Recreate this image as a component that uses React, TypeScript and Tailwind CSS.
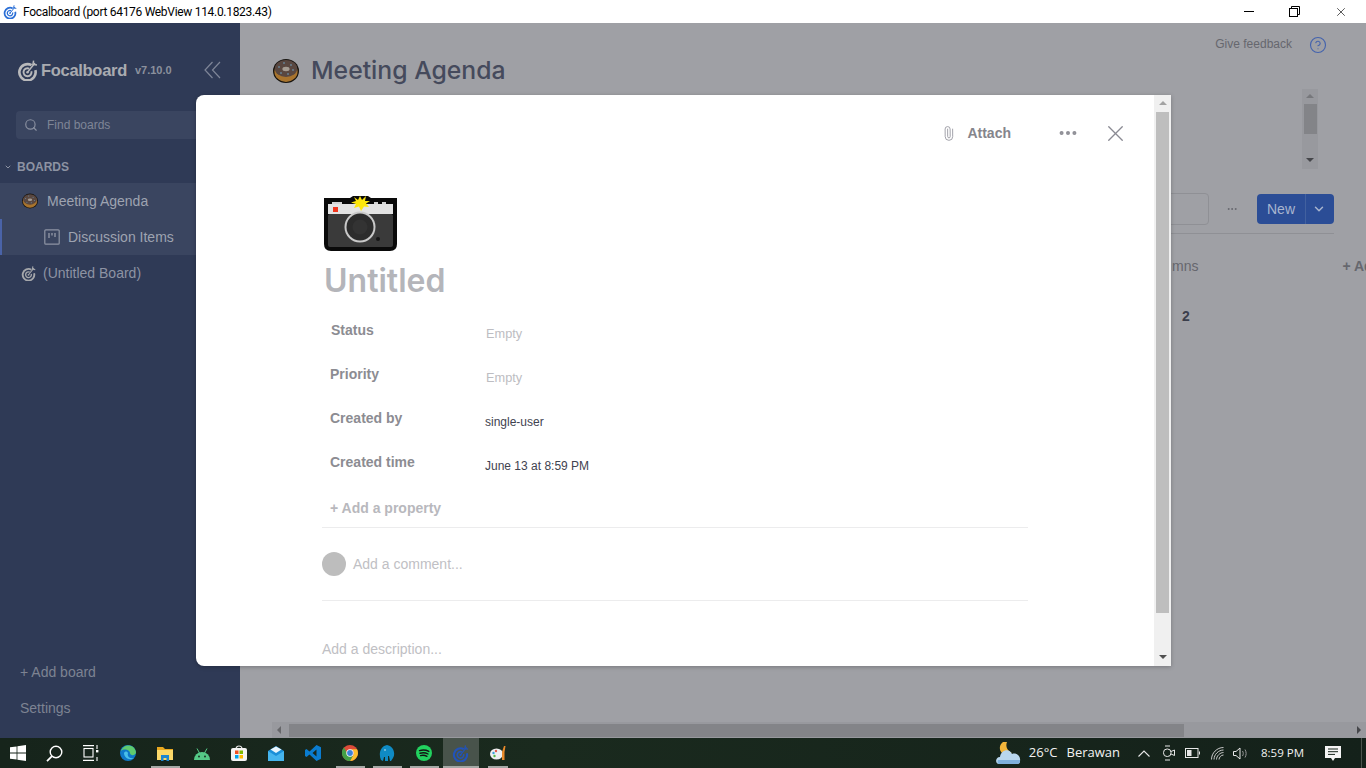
import { ChevronDown, CircleHelp, Ellipsis, Paperclip, Search, X } from "lucide-react";

const sans = "font-['Liberation_Sans',Arial,sans-serif]";
const segoe = "font-['Open_Sans','Noto_Sans',sans-serif]";

function Donut({ size }: { size: number }) {
  return (
    <svg width={size} height={size} viewBox="0 0 26 26">
      <ellipse cx="13" cy="13" rx="13" ry="12" fill="#17130f" />
      <ellipse cx="13" cy="13.5" rx="11.6" ry="10.4" fill="#a8742e" />
      <ellipse cx="13" cy="10.5" rx="11.2" ry="8.4" fill="#594740" />
      <ellipse cx="13" cy="11" rx="3.6" ry="2.2" fill="#a59c92" />
      <circle cx="6" cy="9" r=".8" fill="#6fa8c9" />
      <circle cx="11" cy="5" r=".8" fill="#6fa8c9" />
      <circle cx="18" cy="7" r=".8" fill="#6fa8c9" />
      <circle cx="20" cy="12" r=".8" fill="#6fa8c9" />
      <circle cx="8" cy="15" r=".8" fill="#6fa8c9" />
      <circle cx="15" cy="16" r=".8" fill="#6fa8c9" />
    </svg>
  );
}

function TargetLogo({ size, color }: { size: number; color: string }) {
  return (
    <svg width={size} height={size} viewBox="0 0 24 24" fill="none" stroke={color}>
      <path d="M16.65 5.95A9.3 9.3 0 1 0 20.98 11.6" strokeWidth="3" />
      <path d="M13.9 9.83A4.6 4.6 0 1 0 16.44 12.8" strokeWidth="2.2" />
      <circle cx="12" cy="14" r="1.4" fill={color} stroke="none" />
      <path d="M12 14L20.5 3.5" strokeWidth="1.7" />
      <path d="M19 .6L18.2 5L22.8 5.8" strokeWidth="1.7" />
    </svg>
  );
}

function Camera() {
  return (
    <svg width="73" height="56" viewBox="0 0 73 56">
      <path d="M0 2H26L29 0H44L47 2H73V48Q73 55 66 55H7Q0 55 0 48Z" fill="#0a0a0a" />
      <rect x="8" y="6" width="10" height="3" fill="#d2d2d2" />
      <rect x="50" y="6" width="4" height="3" fill="#d2d2d2" />
      <rect x="58" y="6" width="4" height="3" fill="#d2d2d2" />
      <rect x="4" y="8" width="65" height="10" fill="#e3e3e3" />
      <rect x="4" y="18" width="65" height="33" rx="2" fill="#3a3a3a" />
      <rect x="9" y="11" width="5" height="5" fill="#f1361d" />
      <circle cx="36" cy="31" r="15.5" fill="#c9c9c9" />
      <circle cx="36" cy="31" r="13.5" fill="#2c2c2c" />
      <circle cx="36" cy="31" r="7.5" fill="#333" />
      <circle cx="54" cy="43" r="2" fill="#161616" />
      <path d="M36 0L38 4L42 0L41 5L46 5L42 7.5L45 11L40 10.5L37 15L35 10.5L30 12L32 8L27 6.5L32 5L30 1L34 4Z" fill="#fde60c" />
    </svg>
  );
}

function ScrollArrow({ dir, color }: { dir: "up" | "down" | "left" | "right"; color: string }) {
  const points = { up: "4,1 8,5 0,5", down: "0,1 8,1 4,5", left: "5,0 5,8 1,4", right: "1,0 1,8 5,4" }[dir];
  return (
    <svg width="8" height="8" viewBox="0 0 8 8" className="shrink-0">
      <polygon points={points} fill={color} />
    </svg>
  );
}

function Property({ label, value, empty, indent }: { label: string; value: string; empty?: boolean; indent?: boolean }) {
  return (
    <div className="flex h-[44px] items-start">
      <div className={`w-[163px] pt-[1px] text-[14px] font-bold leading-[16px] text-[#8c8c92] ${indent ? "pl-[9px]" : "pl-[8px]"}`}>{label}</div>
      <div className={`pt-[6px] leading-[14px] ${empty ? "pl-[1px] text-[12.75px] text-[#bdbdc2]" : "text-[12px] text-[#3f4350]"}`}>{value}</div>
    </div>
  );
}

function Sidebar() {
  return (
    <aside className={`flex w-[240px] shrink-0 flex-col bg-[#2f3a56] ${sans}`}>
      <div className="flex h-[60px] items-end pl-[17px] pb-[1px]">
        <div className="flex h-[24px] items-center">
          <TargetLogo size={21} color="#b9b9bb" />
          <span className="ml-[3px] text-[16.5px] font-bold tracking-[-0.3px] text-[#a9abb0]">Focalboard</span>
          <span className="ml-[8px] mt-[1px] text-[11px] font-bold text-[#8b909d]">v7.10.0</span>
          <svg width="17" height="18" viewBox="0 0 17 18" fill="none" stroke="#7f8698" strokeWidth="1.2" className="ml-[32px]">
            <path d="M8.5 1L1 9L8.5 17M16 1L8.5 9L16 17" />
          </svg>
        </div>
      </div>
      <div className="ml-[16px] mt-[28px] flex h-[28px] items-center rounded-[4px] bg-[#3a4560] pl-[8px] text-[12px] text-[#7f8697]">
        <Search size={14} className="mr-[9px] text-[#8a90a0]" />
        Find boards
      </div>
      <div className="mt-[16px] flex h-[28px] items-center pb-[4px] text-[12px] font-bold text-[#8d93a3]">
        <ChevronDown size={8} strokeWidth={3} className="ml-[4px] mr-[5px]" />
        BOARDS
      </div>
      <div className="flex h-[36px] items-center bg-[#3a4560] pl-[22px] text-[14px] text-[#9ea3b0]">
        <Donut size={16} />
        <span className="ml-[9px]">Meeting Agenda</span>
      </div>
      <div className="flex h-[36px] items-center border-l-[2px] border-[#4a63a8] bg-[#3a4560] pl-[42px] text-[14px] text-[#9ea3b0]">
        <svg width="16" height="16" viewBox="0 0 16 16" fill="none" stroke="#8e94a4" strokeWidth="1.2">
          <rect x=".8" y=".8" width="14.4" height="14.4" rx="1" />
          <path d="M5 4V9M8 4V6.5M11 4V8" strokeWidth="1.4" />
        </svg>
        <span className="ml-[8px]">Discussion Items</span>
      </div>
      <div className="flex h-[36px] items-center pl-[21px] text-[14px] text-[#8d93a3]">
        <TargetLogo size={15} color="#a5a7ab" />
        <span className="ml-[7px]">(Untitled Board)</span>
      </div>
      <div className="mt-auto pb-[12px] pl-[20px] text-[14px] text-[#7d8392]">
        <div className="flex h-[36px] items-center">+ Add board</div>
        <div className="flex h-[36px] items-center">Settings</div>
      </div>
    </aside>
  );
}

function Board() {
  return (
    <main className={`relative flex min-w-0 flex-1 flex-col overflow-hidden bg-[#9fa0a5] ${sans}`}>
      <div className="flex h-[31px] items-end justify-end pr-[39px]">
        <span className="mb-[1px] text-[12px] text-[#66676e]">Give feedback</span>
        <CircleHelp size={18} strokeWidth={1.5} className="ml-[17px] text-[#4463ad]" />
      </div>
      <div className="flex h-[35px] items-center pb-[1px] pl-[33px]">
        <Donut size={26} />
        <span className="ml-[12px] font-['Inter',sans-serif] text-[24.75px] font-medium text-[#454a5c]">Meeting Agenda</span>
      </div>
      <div className="mr-[48px] flex h-[80px] w-[16px] flex-col items-center justify-between self-end bg-[#98999e] py-[4px]">
        <ScrollArrow dir="up" color="#77787c" />
        <div className="mb-[22px] mt-[2px] h-[30px] w-[13px] bg-[#838488]" />
        <ScrollArrow dir="down" color="#45464a" />
      </div>
      <div className="mr-[32px] mt-[24px] flex h-[41px] items-start justify-end border-b border-[#8f9095]">
        <div className="h-[32px] w-[60px] rounded-[4px] border border-[#8f9095]" />
        <Ellipsis size={12} className="ml-[17px] mt-[10px] text-[#66676e]" />
        <div className="ml-[19px] mt-[1px] flex h-[30px] w-[77px] items-center rounded-[4px] bg-[#2b4d96] text-[14px] text-[#a9b5cf]">
          <span className="flex h-full w-[49px] items-center justify-center border-r border-[#42619f]">New</span>
          <ChevronDown size={14} strokeWidth={2.5} className="ml-[6px]" />
        </div>
      </div>
      <div className="mt-[23px] flex h-[18px] items-center text-[14px]">
        <span className="ml-[932px] text-[#66676e]">mns</span>
        <span className="ml-[144px] whitespace-nowrap font-bold text-[#66676e]">+ Add</span>
      </div>
      <div className="ml-[942px] mt-[31px] text-[14px] font-bold text-[#3b3e4b]">2</div>
      <div className="ml-[32px] mt-auto flex h-[16px] items-center bg-[#98999e] pl-[4px] pr-[2px]">
        <ScrollArrow dir="left" color="#66676a" />
        <div className="ml-[5px] h-[13px] w-[895px] bg-[#838488]" />
        <div className="flex-1" />
        <ScrollArrow dir="right" color="#45464a" />
      </div>
    </main>
  );
}

function CardDialog() {
  return (
    <div className={`absolute left-[196px] top-[72px] flex h-[571px] w-[975px] overflow-hidden rounded-l-[8px] bg-white shadow-[0_1px_4px_rgba(0,0,0,0.25)] ${sans}`}>
      <div className="flex min-w-0 flex-1 flex-col overflow-hidden">
        <div className="flex h-[76px] items-center pr-[25px]">
          <div className="ml-auto flex items-center">
            <Paperclip size={15} strokeWidth={1.4} className="-rotate-45 text-[#9a9aa3]" />
            <span className="ml-[11px] text-[14px] font-bold text-[#85858c]">Attach</span>
            <Ellipsis size={22} strokeWidth={2.4} className="ml-[46px] text-[#8f8f96]" />
            <X size={27} strokeWidth={1.2} className="ml-[23px] text-[#8a8a93]" />
          </div>
        </div>
        <div className="ml-[126px] w-[706px]">
          <div className="ml-[2px] mt-[25px] h-[56px]">
            <Camera />
          </div>
          <div className="ml-[2px] mt-[9px] h-[40px] font-['Inter',sans-serif] text-[32px] font-semibold leading-[40px] text-[#b4b5ba]">Untitled</div>
          <div className="mt-[20px]">
            <Property label="Status" value="Empty" empty indent />
            <Property label="Priority" value="Empty" empty />
            <Property label="Created by" value="single-user" />
            <Property label="Created time" value="June 13 at 8:59 PM" />
          </div>
          <div className="h-[30px] pl-[8px] pt-[3px] text-[14px] font-bold leading-[16px] text-[#b8b8bd]">+ Add a property</div>
          <div className="flex h-[74px] items-center border-y border-[#ececed]">
            <div className="h-[24px] w-[24px] rounded-full bg-[#bdbdbd]" />
            <span className="ml-[7px] text-[14px] text-[#c0c0c4]">Add a comment...</span>
          </div>
          <div className="mt-[40px] text-[14px] leading-[16px] text-[#c0c0c4]">Add a description...</div>
        </div>
      </div>
      <div className="flex w-[17px] shrink-0 flex-col items-center bg-[#f0f0f0]">
        <div className="flex h-[17px] items-center justify-center">
          <ScrollArrow dir="up" color="#a3a3a3" />
        </div>
        <div className="h-[501px] w-[13px] bg-[#bebebe]" />
        <div className="mt-auto flex h-[17px] items-center justify-center">
          <ScrollArrow dir="down" color="#505050" />
        </div>
      </div>
    </div>
  );
}

function Slot({ children, width = "w-[37px]", bar, active }: { children?: React.ReactNode; width?: string; bar?: boolean; active?: boolean }) {
  return (
    <div className={`relative flex h-full shrink-0 items-center justify-center ${width} ${active ? "bg-[#48534b]" : ""}`}>
      {children}
      {bar && <div className={`absolute bottom-0 h-[2px] bg-[#a5a9a6] ${active ? "inset-x-0" : "inset-x-[4px]"}`} />}
    </div>
  );
}

function TaskbarIcons() {
  return (
    <div className="flex h-full">
      <Slot width="w-[36.5px]">
        <svg width="16" height="16" viewBox="0 0 16 16" fill="#fff">
          <path d="M0 2.3L6.6 1.4V7.6H0ZM7.4 1.3L16 0V7.6H7.4ZM0 8.4H6.6V14.6L0 13.7ZM7.4 8.4H16V16L7.4 14.7Z" />
        </svg>
      </Slot>
      <Slot width="w-[36.5px]">
        <svg width="17" height="17" viewBox="0 0 17 17" fill="none" stroke="#fff" strokeWidth="1.4">
          <circle cx="10" cy="7" r="5.8" />
          <path d="M6 11.2L1 16.2" strokeWidth="1.8" />
        </svg>
      </Slot>
      <Slot width="w-[36.5px]">
        <svg width="16" height="16" viewBox="0 0 16 16" fill="none" stroke="#fff" strokeWidth="1.1">
          <rect x="1" y="3.5" width="9" height="8.5" />
          <path d="M0 .6H11M0 15.4H11M14 0V4M14 12V16" />
          <rect x="13" y="5" width="2.4" height="2.4" fill="#fff" stroke="none" />
        </svg>
      </Slot>
      <Slot>
        <svg width="16" height="16" viewBox="0 0 16 16">
          <circle cx="8" cy="8" r="8" fill="#0f78c8" />
          <path d="M1 6C3-1 14-2 16 7C16 11 10 11 10 8C10 5 4 3 1 6Z" fill="#5fcb6e" />
          <path d="M4 8C4 13 10 16 14 13C9 14 7 11 8 8C7 6 5 6 4 8Z" fill="#49bfe9" />
        </svg>
      </Slot>
      <Slot bar>
        <svg width="16" height="15" viewBox="0 0 16 15">
          <path d="M0 1H6L8 3H16V14H0Z" fill="#e8a820" />
          <rect y="4" width="16" height="10" fill="#fbd96a" />
          <path d="M4 9H12V15H9.5V12H6.5V15H4Z" fill="#1c86d1" />
        </svg>
      </Slot>
      <Slot>
        <svg width="16" height="13" viewBox="0 0 16 13" fill="#55c987">
          <path d="M0 13A8 8 0 0 1 16 13Z" />
          <path d="M3 1.5L5.5 6M13 1.5L10.5 6" stroke="#55c987" strokeWidth="1" />
          <circle cx="5" cy="9.5" r=".9" fill="#16241b" />
          <circle cx="11" cy="9.5" r=".9" fill="#16241b" />
        </svg>
      </Slot>
      <Slot>
        <svg width="16" height="16" viewBox="0 0 16 16">
          <path d="M5 4C5 0 11 0 11 4" fill="none" stroke="#e8e8e8" strokeWidth="1.2" />
          <rect y="3" width="16" height="13" rx="2" fill="#f4f4f4" />
          <rect x="4" y="5.5" width="3.5" height="3.5" fill="#f25022" />
          <rect x="8.5" y="5.5" width="3.5" height="3.5" fill="#7fba00" />
          <rect x="4" y="10" width="3.5" height="3.5" fill="#00a4ef" />
          <rect x="8.5" y="10" width="3.5" height="3.5" fill="#ffb900" />
        </svg>
      </Slot>
      <Slot>
        <svg width="16" height="15" viewBox="0 0 16 15">
          <path d="M0 5L8 0L16 5V15H0Z" fill="#1b8fd8" />
          <path d="M0 5L8 10L16 5V15H0Z" fill="#46b5ee" />
          <path d="M2.5 3.5L8 .5L13.5 3.5L8 7Z" fill="#e9f5fc" />
        </svg>
      </Slot>
      <Slot>
        <svg width="16" height="16" viewBox="0 0 16 16">
          <path d="M11.5 0L16 2.2V13.8L11.5 16L4.5 9.5L1.5 12L0 11V5L1.5 4L4.5 6.5ZM11.5 4.5L7.5 8L11.5 11.5Z" fill="#0a7cd0" />
        </svg>
      </Slot>
      <Slot bar>
        <svg width="16" height="16" viewBox="0 0 16 16">
          <circle cx="8" cy="8" r="8" fill="#dd4b39" />
          <path d="M15 4.2A8 8 0 0 1 8 16L11.4 9.8A3.8 3.8 0 0 0 8 4.2Z" fill="#fbc02d" />
          <path d="M2 2.6L6 9.8A3.8 3.8 0 0 0 11.4 9.8L8 16A8 8 0 0 1 2 2.6Z" fill="#43a047" />
          <circle cx="8" cy="8" r="3.7" fill="#fff" />
          <circle cx="8" cy="8" r="2.9" fill="#3b82d8" />
        </svg>
      </Slot>
      <Slot bar>
        <svg width="16" height="16" viewBox="0 0 16 16">
          <path d="M2 15C-1 8 2 1 8 0C14 1 17 8 14 13L12 16H11L10 11H9V16H6V12H5L4 16Z" fill="#0f8bc4" />
          <circle cx="6" cy="5" r=".8" fill="#d7eef8" />
        </svg>
      </Slot>
      <Slot bar>
        <svg width="16" height="16" viewBox="0 0 16 16">
          <circle cx="8" cy="8" r="8" fill="#22d25f" />
          <path d="M3.5 5.6C7 4.6 10 4.9 12.8 6.4M4 8.2C7 7.4 9.6 7.7 12 9M4.6 10.6C7 10 9 10.3 11 11.3" fill="none" stroke="#141414" strokeWidth="1.4" strokeLinecap="round" />
        </svg>
      </Slot>
      <Slot bar active width="w-[36px]">
        <TargetLogo size={17} color="#2253b8" />
      </Slot>
      <div className="w-[5px]" />
      <Slot bar width="w-[28px]">
        <svg width="16" height="16" viewBox="0 0 16 16">
          <ellipse cx="6.5" cy="9" rx="6.5" ry="5.5" fill="#eef0f2" />
          <circle cx="3.5" cy="8" r="1.2" fill="#3aa0dc" />
          <circle cx="6" cy="6" r="1.2" fill="#e2574c" />
          <circle cx="4.5" cy="11" r="1.2" fill="#54b948" />
          <path d="M12 7L14 1H15.5L14.5 7V15H12Z" fill="#e98a2a" />
        </svg>
      </Slot>
    </div>
  );
}

function Tray() {
  return (
    <div className={`ml-auto flex h-full items-center text-[#f2f2f2] ${segoe}`}>
      <svg width="25" height="24" viewBox="0 0 25 24">
        <path d="M7 1C3 4 3 9 6 12L16 12C12 10 9 6 11 1Z" fill="#f3b53a" />
        <path d="M3 23C-1 23-1 16 4 16C5 8 14 7 16 13C21 11 25 16 24 20C24 22 23 23 21 23Z" fill="#b9d6ee" />
        <path d="M2 19H24V20.5C24 22 23 23 21 23H3C2 23 1 21 2 19Z" fill="#7fb0dc" />
      </svg>
      <span className="ml-[8px] text-[13px]">26°C</span>
      <span className="ml-[9px] text-[13px]">Berawan</span>
      <svg width="12" height="7" viewBox="0 0 12 7" fill="none" stroke="#e8e8e8" strokeWidth="1.1" className="ml-[18px]">
        <path d="M.5 6.5L6 1L11.5 6.5" />
      </svg>
      <svg width="12" height="16" viewBox="0 0 12 16" fill="none" stroke="#e8e8e8" strokeWidth="1" className="ml-[13px]">
        <rect x=".5" y="4" width="7.5" height="7.5" rx="3.5" />
        <path d="M8 6.5L11.5 5V10.5L8 9M2 1H7M2 15H7" />
      </svg>
      <svg width="15" height="10" viewBox="0 0 15 10" fill="none" stroke="#e8e8e8" className="ml-[10px]">
        <rect x=".5" y=".5" width="12.5" height="9" />
        <rect x="2" y="2" width="4.5" height="6" fill="#e8e8e8" stroke="none" />
        <path d="M14.5 3.5V6.5" />
      </svg>
      <svg width="13" height="13" viewBox="0 0 13 13" fill="none" stroke="#c9c9c9" strokeWidth="1" className="ml-[11px]">
        <path d="M.5 12.5C.5 6 6 .5 12.5 .5M3 12.5C3 7.5 7.5 3 12.5 3M5.5 12.5C5.5 9 9 5.5 12.5 5.5M8 12.5C8 10.5 10 8 12.5 8" />
      </svg>
      <svg width="16" height="13" viewBox="0 0 16 13" fill="none" stroke="#e8e8e8" strokeWidth="1" className="ml-[9px]">
        <path d="M.5 4.5H3L7 1V12L3 8.5H.5Z" />
        <path d="M9.5 4C10.5 5.5 10.5 7.5 9.5 9M12 2.5C13.5 5 13.5 8 12 10.5" stroke="#9a9a9a" />
      </svg>
      <span className="ml-[12px] text-[11.5px]">8:59 PM</span>
      <svg width="16" height="15" viewBox="0 0 16 15" className="ml-[21px]">
        <path d="M0 0H16V12H10L8 15L6 12H0Z" fill="#f5f5f5" />
        <path d="M3 3H13M3 5.7H13M3 8.4H10" stroke="#16241b" strokeWidth="1" />
      </svg>
      <div className="ml-[20px] h-full w-[1px] bg-[#4a544d]" />
      <div className="w-[4px]" />
    </div>
  );
}

export default function App() {
  return (
    <div className="flex h-[768px] w-[1366px] flex-col overflow-hidden bg-white">
      <header className="flex h-[23px] shrink-0 items-center bg-white text-black font-['Roboto',sans-serif]">
        <div className="ml-[3px]">
          <TargetLogo size={14} color="#2b6fd6" />
        </div>
        <span className="ml-[6px] text-[12px] tracking-[-0.3px]">Focalboard (port 64176 WebView 114.0.1823.43)</span>
        <div className="ml-auto flex items-center pr-[18px]">
          <div className="h-[1px] w-[10px] bg-black" />
          <svg width="11" height="11" viewBox="0 0 11 11" fill="none" stroke="#000" className="ml-[35px]">
            <rect x=".5" y="2.5" width="8" height="8" />
            <path d="M2.5 2.5V.5H10.5V8.5H8.5" />
          </svg>
          <X size={14} strokeWidth={1.1} className="ml-[34px] text-black" />
        </div>
      </header>
      <div className="relative flex min-h-0 flex-1">
        <Sidebar />
        <Board />
        <CardDialog />
      </div>
      <footer className="flex h-[30px] shrink-0 bg-[linear-gradient(90deg,#16241b,#1a2a1e_40%,#14211a)]">
        <TaskbarIcons />
        <Tray />
      </footer>
    </div>
  );
}
